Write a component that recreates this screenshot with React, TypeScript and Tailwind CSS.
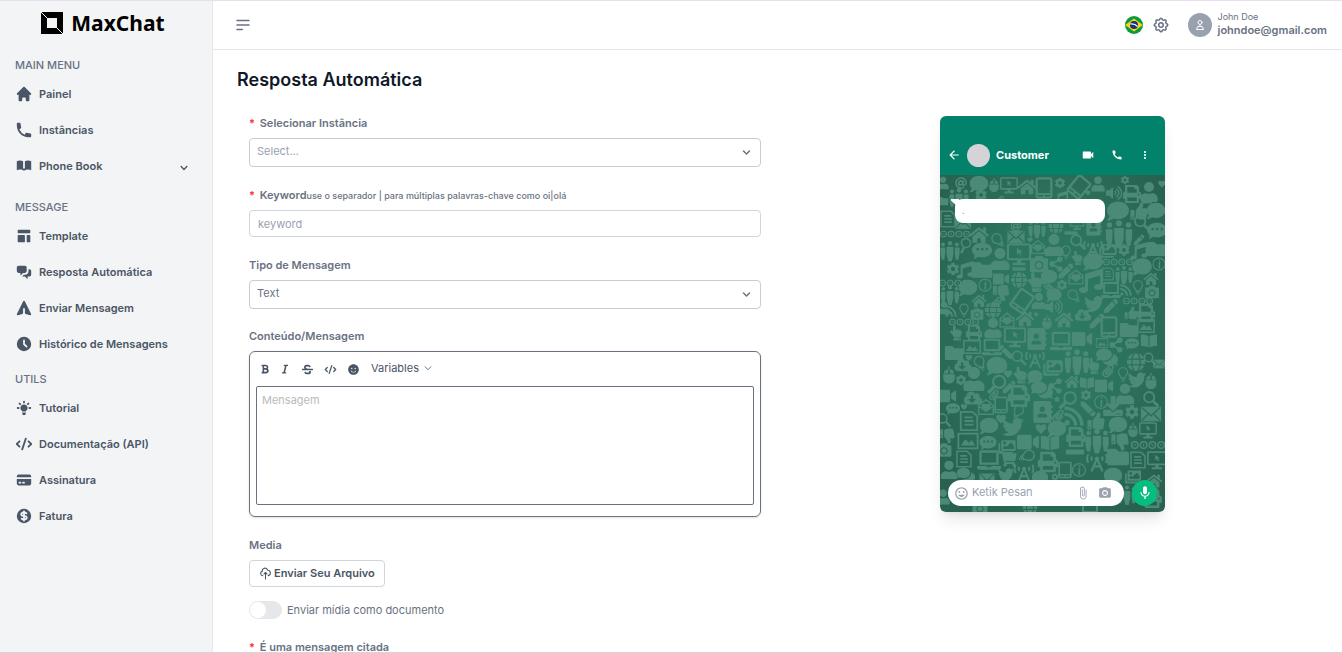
import type { ReactNode } from "react";
import type { IconType } from "react-icons";
import {
  HiHome,
  HiPhone,
  HiBookOpen,
  HiTemplate,
  HiChatAlt2,
  HiPaperAirplane,
  HiClock,
  HiLightBulb,
  HiCode,
  HiCreditCard,
  HiCurrencyDollar,
  HiChevronDown,
  HiOutlineChevronDown,
  HiOutlineMenuAlt2,
  HiOutlineCog,
  HiOutlineUser,
  HiOutlineCloudUpload,
} from "react-icons/hi";
import {
  FaBold,
  FaItalic,
  FaStrikethrough,
  FaSmile,
  FaAt,
  FaAddressBook,
  FaBookOpen,
  FaBroadcastTower,
  FaCamera,
  FaCloudDownloadAlt,
  FaCog,
  FaComment,
  FaComments,
  FaDownload,
  FaFolder,
  FaGlobe,
  FaHandPointUp,
  FaHeart,
  FaHome,
  FaImages,
  FaLaptop,
  FaMusic,
  FaPaperclip,
  FaPen,
  FaPrint,
  FaRss,
  FaShareAlt,
  FaShoppingCart,
  FaStar,
  FaThumbsDown,
  FaThumbsUp,
  FaTwitter,
  FaUser,
  FaVideo,
  FaVolumeUp,
} from "react-icons/fa";
import {
  MdArrowBack,
  MdAttachFile,
  MdCall,
  MdMic,
  MdMoreVert,
  MdPhotoCamera,
  MdTagFaces,
  MdVideocam,
} from "react-icons/md";

interface NavItem {
  label: string;
  icon: IconType;
  collapsible?: boolean;
}

interface NavGroup {
  title: string;
  items: NavItem[];
}

const navGroups: NavGroup[] = [
  {
    title: "MAIN MENU",
    items: [
      { label: "Painel", icon: HiHome },
      { label: "Instâncias", icon: HiPhone },
      { label: "Phone Book", icon: HiBookOpen, collapsible: true },
    ],
  },
  {
    title: "MESSAGE",
    items: [
      { label: "Template", icon: HiTemplate },
      { label: "Resposta Automática", icon: HiChatAlt2 },
      { label: "Enviar Mensagem", icon: HiPaperAirplane },
      { label: "Histórico de Mensagens", icon: HiClock },
    ],
  },
  {
    title: "UTILS",
    items: [
      { label: "Tutorial", icon: HiLightBulb },
      { label: "Documentação (API)", icon: HiCode },
      { label: "Assinatura", icon: HiCreditCard },
      { label: "Fatura", icon: HiCurrencyDollar },
    ],
  },
];

const editorActions = [
  { label: "Bold", icon: FaBold, size: "size-2.5" },
  { label: "Italic", icon: FaItalic, size: "size-2.5" },
  { label: "Strikethrough", icon: FaStrikethrough, size: "size-[11px]" },
  { label: "Code", icon: HiCode, size: "size-[13px]" },
  { label: "Emoji", icon: FaSmile, size: "size-[11px]" },
];

// Doodles that no icon set has, drawn on a 24x24 grid
function Shape({ children, size = 24, ...rest }: any) {
  return (
    <svg viewBox="0 0 24 24" width={size} height={size} fill="none" stroke="currentColor" strokeWidth="2" {...rest}>
      {children}
    </svg>
  );
}

const People = (p: any) => (
  <Shape {...p} fill="currentColor" stroke="none">
    <circle cx="4" cy="4.500" r="2.300" />
    <circle cx="12" cy="3" r="2.600" />
    <circle cx="20" cy="4.500" r="2.300" />
    <path d="M1 8h5.500v7L5.500 22h-3L1 15zM8 7h8v8.500l-2 8.500h-4l-2-8.500zM17.500 8H23v7l-1.500 7h-3l-1-7z" />
  </Shape>
);
const Monitor = (p: any) => (
  <Shape {...p}>
    <rect x="1.500" y="3" width="21" height="14" rx="1" />
    <path d="M6 21.500h12" strokeWidth="2.500" />
    <path d="M10 17h4v4h-4zM10 6l5.500 4-2.500.3 1.500 2.700-1.200.6-1.300-2.600-2 1.700z" fill="currentColor" stroke="none" />
  </Shape>
);
const Mail = (p: any) => (
  <Shape {...p} strokeWidth="1.500">
    <rect x="1" y="4" width="22" height="16" fill="currentColor" stroke="none" />
    <path d="M2 5l10 9 10-9M2 19l7-7M22 19l-7-7" stroke="#2b7059" />
  </Shape>
);
const OpenMail = (p: any) => (
  <Shape {...p}>
    <path d="M2 10L12 2l10 8v12H2zM2 11l10 7 10-7" />
    <path d="M6 8h12v5l-6 4-6-4z" fill="currentColor" stroke="none" />
  </Shape>
);
const Search = (p: any) => (
  <Shape {...p}>
    <circle cx="9.500" cy="9.500" r="7" strokeWidth="2.500" />
    <path d="M15 15l7 7" strokeWidth="4" />
  </Shape>
);
const Bulb = (p: any) => (
  <Shape {...p}>
    <path d="M9 18c0-4-4-4-4-9a7 7 0 0114 0c0 5-4 5-4 9z" />
    <path d="M9 20h6M10 23h4" />
  </Shape>
);
const Doc = (p: any) => (
  <Shape {...p}>
    <path d="M3 2h13l5 5v15H3zM7 8h9M7 12h10M7 16h10" />
  </Shape>
);
const Picture = (p: any) => (
  <Shape {...p}>
    <rect x="1.500" y="4" width="21" height="16" />
    <path d="M4 17l5-7 4 4 3-3 4 6z" fill="currentColor" stroke="none" />
  </Shape>
);
const Info = (p: any) => (
  <Shape {...p}>
    <circle cx="12" cy="12" r="10" />
    <path d="M11 10h2l-1 8h2M12 6h2" strokeWidth="2.500" />
  </Shape>
);
const Mouse = (p: any) => (
  <Shape {...p}>
    <path d="M5 12h14v4a7 7 0 01-14 0z" fill="currentColor" />
    <path d="M11 10H5c0-4 3-6 6-6zM13 10h6c0-4-3-6-6-6z" fill="currentColor" stroke="none" />
    <path d="M12 4V0" />
  </Shape>
);
const Tablet = (p: any) => (
  <Shape {...p}>
    <rect x="4" y="1.500" width="16" height="21" rx="2" strokeWidth="2.500" />
    <path d="M5 18.500h14M11 20.500h2" />
  </Shape>
);
const Dots = (p: any) => (
  <Shape {...p}>
    <path d="M12 3c6 0 11 3.500 11 8s-5 8-11 8c-2 0-3 0-4-.6L3 21l1-4.500C2 15 1 13 1 11c0-4.500 5-8 11-8z" fill="currentColor" stroke="none" />
    <path d="M6 10h2.500M11 10h2.500M16 10h2.500" stroke="#2b7059" strokeWidth="2.500" />
  </Shape>
);
const Badges = ({ size }: any) => (
  <Shape viewBox="0 0 48 12" width={size * 4} height={size} x={-size * 1.5}>
    <circle cx="6" cy="6" r="4.500" />
    <circle cx="18" cy="6" r="4.500" />
    <circle cx="30" cy="6" r="4.500" />
    <circle cx="42" cy="6" r="4.500" />
    <path d="M4 6h4M18 4v4M28 4l4 4M40 6h4" strokeWidth="1.500" />
  </Shape>
);
const Bar = (p: any) => (
  <Shape {...p}>
    <path d="M1 9h22v6H1z" fill="currentColor" stroke="none" />
  </Shape>
);

// [icon, centre x, centre y, size, rotation]
type Doodle = [any, number, number, number, number?];

const doodles: Doodle[] = [
  [FaUser, 3, 8, 12],
  [FaAt, 21, 8, 11],
  [FaComment, 39, 9, 17],
  [Mouse, 54, 10, 13],
  [Monitor, 69, 10, 17],
  [FaHome, 87, 12, 17],
  [Tablet, 104, 13, 20],
  [FaCog, 120, 8, 10],
  [Tablet, 139, 12, 20, 40],
  [FaUser, 158, 9, 14],
  [FaVolumeUp, 174, 18, 15],
  [FaCog, 185, 5, 8],
  [FaPrint, 192, 19, 17],
  [FaUser, 209, 17, 18],
  [FaHeart, 222, 9, 7],
  [People, 19, 23, 19],
  [FaCog, 41, 20, 11],
  [FaFolder, 3, 26, 10],
  [FaMusic, 121, 23, 13],
  [FaHeart, 148, 18, 5],
  [FaPaperclip, 60, 25, 8],
  [FaComment, 178, 36, 20],
  [FaThumbsUp, 199, 36, 16],
  [FaComment, 216, 36, 17],
  [Bar, 207, 27, 10],
  [Doc, 8, 44, 17],
  [Mail, 23, 48, 16],
  [Search, 202, 48, 16],
  [Dots, 217, 56, 20],
  [People, 179, 59, 26],
  [Badges, 15, 59, 7],
  [FaHome, 39, 60, 18],
  [FaAt, 76, 51, 10],
  [People, 97, 54, 17],
  [FaGlobe, 116, 51, 14],
  [FaAddressBook, 154, 52, 16],
  [Monitor, 137, 48, 14],
  [Bulb, 58, 65, 15, -40],
  [Mail, 76, 62, 17],
  [FaHeart, 90, 65, 5],
  [Bar, 131, 58, 13],
  [FaPen, 199, 65, 10],
  [People, 10, 76, 19],
  [Search, 25, 70, 14, 70],
  [Dots, 42, 76, 20],
  [FaUser, 60, 84, 20],
  [Monitor, 79, 79, 23],
  [OpenMail, 98, 72, 14],
  [FaUser, 114, 70, 20],
  [Search, 138, 67, 16],
  [Bulb, 126, 77, 13],
  [FaBroadcastTower, 153, 74, 18],
  [FaHandPointUp, 137, 83, 13],
  [FaImages, 168, 76, 16],
  [FaCog, 184, 75, 11],
  [FaMusic, 199, 76, 16],
  [FaFolder, 216, 74, 17],
  [FaCog, 13, 94, 12],
  [FaMusic, 25, 95, 16],
  [FaFolder, 42, 95, 19],
  [Bar, 79, 94, 13],
  [FaCamera, 99, 89, 17],
  [FaShareAlt, 116, 89, 14],
  [FaComment, 153, 87, 18],
  [Badges, 178, 87, 7],
  [FaComment, 202, 92, 18],
  [Info, 219, 89, 13],
  [FaVideo, 61, 104, 15],
  [FaGlobe, 79, 105, 15],
  [FaHandPointUp, 95, 107, 18],
  [FaComment, 109, 102, 15],
  [FaPen, 126, 96, 14],
  [OpenMail, 136, 102, 15],
  [FaMusic, 151, 106, 22],
  [Doc, 168, 99, 13],
  [People, 184, 100, 17],
  [Badges, 14, 108, 7],
  [FaComment, 28, 113, 17],
  [Info, 45, 110, 13],
  [FaPaperclip, 109, 112, 10, 90],
  [FaCog, 122, 110, 10],
  [Bulb, 198, 112, 14],
  [FaHome, 211, 104, 14],
  [FaLaptop, 171, 115, 18],
  [FaCamera, 212, 117, 13],
  [FaRss, 186, 115, 12],
  [People, 10, 120, 18],
  [FaHome, 39, 126, 14],
  [FaThumbsDown, 61, 118, 15],
  [FaPaperclip, 57, 127, 10],
  [Tablet, 82, 126, 21, 35],
  [FaUser, 99, 126, 15],
  [FaComment, 114, 120, 14],
  [FaVolumeUp, 114, 132, 16],
  [Bulb, 134, 121, 14, -40],
  [FaTwitter, 154, 129, 18],
  [FaPen, 171, 131, 13],
  [FaUser, 4, 133, 12],
  [FaRss, 11, 136, 12],
  [Bulb, 24, 135, 13],
  [FaGlobe, 53, 135, 15],
  [FaCamera, 37, 139, 12],
  [FaPrint, 206, 138, 17],
  [FaThumbsUp, 191, 138, 12],
  [Badges, 198, 126, 7],
  [FaStar, 96, 139, 5],
  [FaCloudDownloadAlt, 143, 140, 15],
  [FaPen, 157, 146, 14],
  [Badges, 24, 147, 7],
  [FaUser, 53, 153, 18],
  [OpenMail, 67, 145, 15],
  [FaHome, 85, 144, 17],
  [Mouse, 107, 147, 13],
  [FaHome, 124, 145, 17],
  [Tablet, 169, 152, 20],
  [FaFolder, 189, 155, 17],
  [Picture, 206, 151, 17],
  [FaHandPointUp, 16, 158, 14],
  [FaPrint, 34, 158, 15],
  [Monitor, 75, 162, 21],
  [FaAddressBook, 97, 164, 20],
  [FaLaptop, 121, 166, 21],
  [FaVideo, 142, 164, 19],
  [FaFolder, 14, 178, 17],
  [Picture, 32, 172, 17],
  [FaLaptop, 52, 172, 19],
  [FaShareAlt, 176, 170, 14],
  [Dots, 192, 169, 14],
  [FaBookOpen, 209, 166, 15],
  [FaPen, 66, 177, 13, -90],
  [Search, 79, 183, 15],
  [FaBroadcastTower, 95, 185, 18],
  [Picture, 162, 168, 12],
  [FaComments, 167, 182, 20],
  [People, 137, 187, 24],
  [FaGlobe, 196, 187, 17],
  [Search, 210, 184, 13],
  [Mail, 219, 189, 12],
  [FaHeart, 29, 183, 6],
  [FaCloudDownloadAlt, 23, 190, 16],
  [Bulb, 40, 188, 15, -25],
  [FaComment, 57, 191, 19],
  [FaImages, 113, 193, 18],
  [FaHandPointUp, 80, 200, 16],
  [FaHandPointUp, 153, 191, 15],
  [FaPaperclip, 168, 196, 12],
  [Bulb, 183, 199, 14],
  [Mouse, 9, 200, 16],
  [FaUser, 34, 204, 22],
  [FaCog, 21, 205, 10],
  [FaHeart, 68, 199, 8],
  [FaComment, 95, 202, 14],
  [FaTwitter, 197, 205, 17],
  [Mouse, 211, 206, 15],
  [FaShareAlt, 115, 211, 14],
  [FaHome, 132, 207, 14],
  [FaBookOpen, 147, 208, 13],
  [FaVideo, 164, 211, 17],
  [Search, 57, 209, 19, 90],
  [FaPen, 69, 212, 12],
  [FaComments, 102, 215, 20],
  [FaPrint, 79, 221, 20],
  [FaUser, 185, 219, 19],
  [FaVideo, 7, 221, 17],
  [FaPaperclip, 54, 220, 10],
  [FaCloudDownloadAlt, 33, 223, 17],
  [FaStar, 117, 224, 6],
  [Search, 128, 225, 18, 90],
  [FaCog, 146, 220, 10],
  [Info, 161, 227, 14],
  [Search, 211, 224, 16],
  [FaDownload, 173, 231, 18],
  [OpenMail, 46, 232, 16],
  [Tablet, 61, 230, 16],
  [Dots, 13, 234, 14],
  [FaHeart, 24, 232, 6],
  [Bulb, 78, 237, 14, 30],
  [FaAddressBook, 103, 237, 20],
  [FaPaperclip, 118, 241, 12],
  [FaRss, 134, 241, 20],
  [FaPen, 148, 234, 14, 90],
  [FaCog, 192, 237, 13],
  [Mail, 211, 239, 20],
  [Doc, 29, 246, 20],
  [Search, 4, 245, 14],
  [FaHeart, 61, 244, 9],
  [FaComment, 49, 251, 17],
  [FaTwitter, 73, 252, 20],
  [FaHeart, 101, 254, 10],
  [FaThumbsUp, 156, 246, 16],
  [FaComment, 178, 250, 17],
  [FaComment, 117, 254, 17],
  [Mouse, 193, 255, 13],
  [Monitor, 208, 255, 17],
  [FaThumbsDown, 7, 261, 14],
  [Picture, 28, 266, 20],
  [Dots, 48, 268, 17],
  [FaImages, 67, 272, 16],
  [FaVideo, 88, 267, 20],
  [FaBookOpen, 110, 268, 17],
  [FaPrint, 136, 262, 18],
  [People, 157, 266, 23],
  [FaThumbsDown, 180, 267, 16],
  [Badges, 208, 270, 8],
  [FaCamera, 4, 275, 14],
  [Doc, 24, 284, 17],
  [FaLaptop, 49, 285, 22],
  [FaShoppingCart, 68, 284, 16],
  [Bulb, 87, 281, 16, 70],
  [FaPrint, 108, 287, 19],
  [Bar, 135, 277, 18],
  [FaFolder, 178, 282, 20],
  [Doc, 198, 285, 17],
  [Monitor, 217, 285, 19],
  [FaBroadcastTower, 157, 288, 20],
  [FaUser, 9, 295, 17],
  [FaBroadcastTower, 84, 298, 19],
  [Tablet, 125, 295, 16],
  [Info, 139, 295, 14],
  [FaComments, 26, 300, 17],
  [FaTwitter, 66, 300, 15],
  [FaComment, 173, 301, 17],
  [FaComment, 100, 303, 15],
  [FaImages, 193, 302, 15],
  [Mail, 47, 304, 15],
  [FaHome, 214, 306, 15],
  [FaCog, 115, 302, 7],
  [People, 187, 320, 18],
  [FaPrint, 212, 323, 18],
  [FaUser, 3, 322, 14],
  [FaCamera, 40, 333, 14],
  [FaGlobe, 90, 332, 14],
  [FaLaptop, 150, 334, 18],
];

function Wallpaper() {
  return (
    <svg
      viewBox="0 0 225 337"
      preserveAspectRatio="xMidYMid slice"
      className="absolute inset-0 size-full text-[#4b8a77]"
      aria-hidden="true"
    >
      <defs>
        <radialGradient id="glow" cx="50%" cy="45%" r="65%">
          <stop offset="0" stopColor="#2f7c63" />
          <stop offset="0.500" stopColor="#2c735d" />
          <stop offset="1" stopColor="#28614f" />
        </radialGradient>
      </defs>
      <rect width="225" height="337" fill="url(#glow)" />
      {doodles.map(([Icon, x, y, size, turn = 0], i) => (
        <g key={i} transform={`translate(${x} ${y}) rotate(${turn}) scale(1.1) translate(${-size / 2} ${-size / 2})`}>
          <Icon size={size} />
        </g>
      ))}
    </svg>
  );
}

function BrazilFlag() {
  return (
    <svg viewBox="0 0 18 18" className="size-[18px]" aria-hidden="true">
      <circle cx="9" cy="9" r="9" fill="#0b9b3c" />
      <path d="M9 2.500L17.800 9 9 15.500.2 9z" fill="#f9d616" />
      <circle cx="9" cy="9" r="4" fill="#1b2f7c" />
      <path d="M5.200 8c2.700-.4 5.500.5 7.400 2.500" stroke="#fff" strokeWidth="1.200" fill="none" />
    </svg>
  );
}

function Logo() {
  return (
    <a href="#" className="mb-[3px] flex h-11 items-center justify-center gap-2 pr-1.5 text-black">
      <svg viewBox="0 0 22 22" className="size-[22px]" aria-hidden="true">
        <rect width="22" height="22" fill="#000" />
        <rect x="6" y="6" width="10" height="10" fill="#f3f4f6" />
        <path d="M0 0l7 7M15 15l7 7" stroke="#f3f4f6" strokeWidth="1" />
      </svg>
      <span className="font-['Noto_Sans',sans-serif] text-[21px] leading-7 font-bold">MaxChat</span>
    </a>
  );
}

function Sidebar() {
  return (
    <aside className="w-[213px] shrink-0 border-r border-gray-200 bg-gray-100">
      <Logo />
      <nav className="px-[15px]">
        {navGroups.map((group) => (
          <div key={group.title} className="pt-[9px]">
            <h2 className="text-[11px] leading-4 font-medium text-gray-500">{group.title}</h2>
            <ul className="pt-[3px]">
              {group.items.map((item) => (
                <li key={item.label} className={item.collapsible ? "mb-1.5" : undefined}>
                  <a href="#" className="flex h-9 items-center gap-1.5 text-[11px] font-semibold text-gray-600">
                    <item.icon className="size-[18px]" />
                    <span className="flex-1">{item.label}</span>
                    {item.collapsible && <HiChevronDown className="mt-1 mr-1.5 size-3.5" />}
                  </a>
                </li>
              ))}
            </ul>
          </div>
        ))}
      </nav>
    </aside>
  );
}

function Header() {
  return (
    <header className="flex h-[49px] shrink-0 items-center justify-between border-b border-gray-200 pr-[15px] pl-[21px] text-gray-500">
      <button type="button" aria-label="Menu">
        <HiOutlineMenuAlt2 className="size-[18px]" />
      </button>
      <div className="flex items-center">
        <button type="button" aria-label="Português" className="mr-[9px]">
          <BrazilFlag />
        </button>
        <button type="button" aria-label="Settings" className="mr-[18px]">
          <HiOutlineCog className="size-[18px]" />
        </button>
        <span className="mr-1.5 flex size-6 items-center justify-center rounded-full bg-gray-400 text-white">
          <HiOutlineUser className="size-3" />
        </span>
        <div className="pb-0.5">
          <div className="text-[9px] leading-3">John Doe</div>
          <div className="text-[11px] leading-[14px] font-semibold">johndoe@gmail.com</div>
        </div>
      </div>
    </header>
  );
}

function Label({ htmlFor, required, children }: { htmlFor: string; required?: boolean; children: ReactNode }) {
  return (
    <label htmlFor={htmlFor} className="mb-1.5 block leading-[18px] font-semibold">
      {required && <span className="mr-0.5 text-red-500">*</span>}
      {required && " "}
      {children}
    </label>
  );
}

function SelectBox({ id, value, muted }: { id: string; value: string; muted?: boolean }) {
  return (
    <div className="relative">
      <select
        id={id}
        className={`block h-[29px] w-full appearance-none rounded border border-[#ccc] bg-white px-[7px] pb-0.5 ${
          muted ? "text-gray-400" : "text-gray-500"
        }`}
      >
        <option>{value}</option>
      </select>
      <HiChevronDown className="pointer-events-none absolute top-[7px] right-[7px] size-[15px]" />
    </div>
  );
}

function ReplyForm() {
  return (
    <form className="min-w-0 px-3 text-[11px] text-gray-500">
      <div className="mb-[19px]">
        <Label htmlFor="instance" required>
          Selecionar Instância
        </Label>
        <SelectBox id="instance" value="Select..." muted />
      </div>

      <div className="mb-[19px]">
        <Label htmlFor="keyword" required>
          Keyword
          <span className="text-[9px] leading-3 font-medium">
            use o separador | para múltiplas palavras-chave como oi|olá
          </span>
        </Label>
        <input
          id="keyword"
          placeholder="keyword"
          className="block h-[27px] w-full rounded border border-gray-300 px-2 placeholder:text-gray-400"
        />
      </div>

      <div className="mb-[18px]">
        <Label htmlFor="type">Tipo de Mensagem</Label>
        <SelectBox id="type" value="Text" />
      </div>

      <div className="mb-[19px]">
        <Label htmlFor="message">Conteúdo/Mensagem</Label>
        <div className="rounded-md border border-gray-500 px-1.5 pb-[11px] shadow">
          <div className="flex h-[34px] items-center text-gray-600">
            {editorActions.map((action) => (
              <button
                key={action.label}
                type="button"
                aria-label={action.label}
                className="flex w-[23px] justify-center first:w-[17px]"
              >
                <action.icon className={action.size} />
              </button>
            ))}
            <button type="button" className="ml-1.5 flex items-center gap-1 pb-0.5">
              Variables
              <HiOutlineChevronDown className="size-2.5" />
            </button>
          </div>
          <textarea
            id="message"
            placeholder="Mensagem"
            className="block h-[119px] w-full resize-none rounded-xs border border-gray-500 px-[5px] py-[5px] leading-4 placeholder:text-[#bbb]"
          />
        </div>
      </div>

      <div className="mb-3.5">
        <Label htmlFor="upload">Media</Label>
        <button
          id="upload"
          type="button"
          className="flex h-[27px] items-center gap-0.5 rounded border border-gray-300 px-[9px] font-semibold text-gray-600"
        >
          <HiOutlineCloudUpload className="size-[13px]" />
          Enviar Seu Arquivo
        </button>
      </div>

      <label className="mb-[19px] flex h-[18px] items-center gap-[5px]">
        <input
          type="checkbox"
          role="switch"
          className="h-[18px] w-[33px] appearance-none rounded-full bg-gray-200 before:m-px before:block before:size-4 before:rounded-full before:bg-white checked:bg-emerald-500 checked:before:ml-4"
        />
        Enviar mídia como documento
      </label>

      <Label htmlFor="quoted" required>
        É uma mensagem citada
      </Label>
      <SelectBox id="quoted" value="Select..." muted />
    </form>
  );
}

function PhonePreview() {
  return (
    <section className="flex h-[396px] w-[225px] flex-col overflow-hidden rounded-md shadow-lg">
      <div className="flex h-[59px] items-end bg-[#02826a] pr-2 pb-[9px] pl-[7px] text-white">
        <div className="flex h-[22px] flex-1 items-center">
          <MdArrowBack className="size-3.5" />
          <span className="mx-1.5 size-[23px] rounded-full bg-[#d4d4d8]" />
          <span className="flex-1 text-[11px] font-bold">Customer</span>
          <div className="mr-1.5 flex items-center gap-4">
            <MdVideocam className="size-3.5" />
            <MdCall className="size-3" />
            <MdMoreVert className="size-3" />
          </div>
        </div>
      </div>
      <div className="relative flex flex-1 flex-col justify-between pt-6 pb-1.5">
        <Wallpaper />
        <div className="relative ml-[11px] flex">
          <svg viewBox="0 0 8 8" className="size-2 text-white" aria-hidden="true">
            <path d="M0 0h8v8C4 6 3 4 0 1.500z" fill="currentColor" />
          </svg>
          <div className="-ml-1 h-6 w-[150px] rounded-lg bg-white px-[7px] text-[9px] leading-6 text-gray-400">.</div>
        </div>
        <div className="relative flex items-center gap-2 px-2">
          <div className="flex h-[26px] w-44 items-center rounded-full bg-white px-1.5 text-gray-400">
            <MdTagFaces className="size-[15px] shrink-0" />
            <input
              aria-label="Ketik Pesan"
              placeholder="Ketik Pesan"
              className="ml-[3px] min-w-0 flex-1 pb-0.5 text-[11px] placeholder:text-gray-400"
            />
            <MdAttachFile className="mr-2 size-3.5 shrink-0" />
            <MdPhotoCamera className="mr-1.5 size-3.5 shrink-0" />
          </div>
          <button
            type="button"
            aria-label="Mic"
            className="flex size-[26px] items-center justify-center rounded-full bg-[#05bd7f] text-white"
          >
            <MdMic className="size-4" />
          </button>
        </div>
      </div>
    </section>
  );
}

export default function App() {
  return (
    <div className="flex h-screen overflow-hidden border-t border-b border-t-[#e9deee] border-b-gray-300 bg-white font-[Inter,sans-serif]">
      <Sidebar />
      <div className="flex min-w-0 flex-1 flex-col">
        <Header />
        <main className="flex-1 overflow-hidden px-6 pt-[17px]">
          <h1 className="text-[18px] leading-[26px] font-semibold text-gray-900">Resposta Automática</h1>
          <div className="grid grid-cols-2 gap-[9px] pt-[21px]">
            <ReplyForm />
            <div className="flex justify-center pt-0.5 pl-[5px]">
              <PhonePreview />
            </div>
          </div>
        </main>
      </div>
    </div>
  );
}
